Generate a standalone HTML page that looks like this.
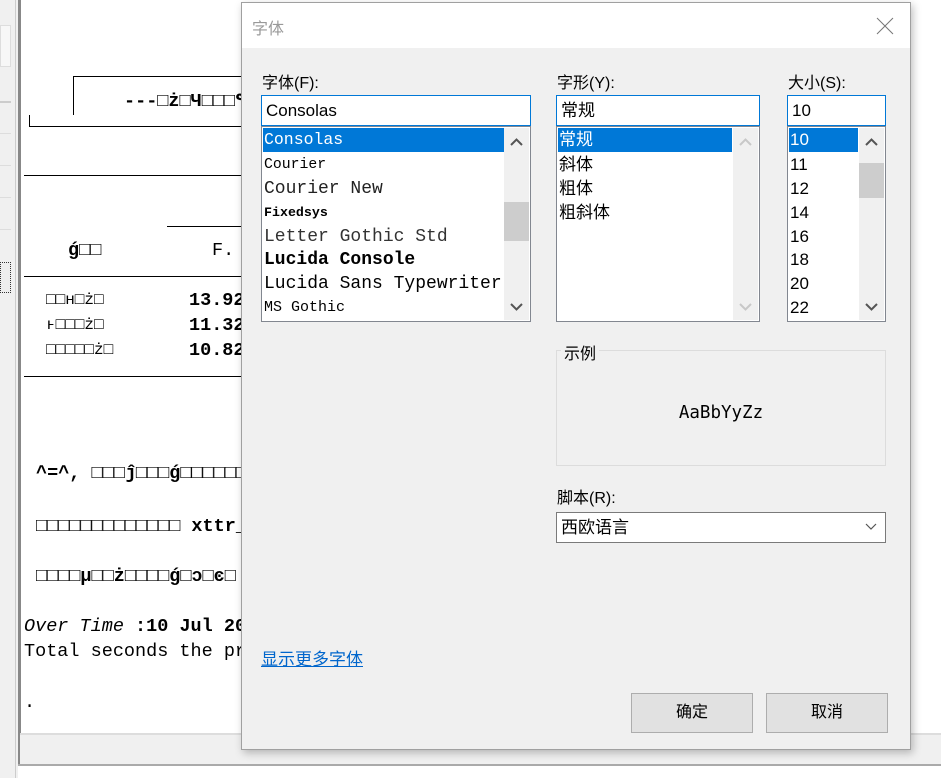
<!DOCTYPE html>
<html><head><meta charset="utf-8"><style>
*{margin:0;padding:0;box-sizing:border-box}
body{width:941px;height:778px;position:relative;overflow:hidden;background:#fff;font-family:"Liberation Sans","Noto Sans CJK SC",sans-serif}
.a{position:absolute}
.mono{font-family:"Liberation Mono","DejaVu Sans Mono","Noto Sans CJK SC",monospace;font-size:18.5px;color:#000;white-space:pre}
.lbl{font-size:16px;color:#000;font-family:"Liberation Sans","Noto Sans CJK SC",sans-serif}
.box{background:#fff;border:1px solid #828790}
.inp{background:#fff;border:1px solid #0078d7;font-size:17px;padding:0 4px;line-height:29px}
.row{position:absolute;left:1px;height:24px;line-height:24px;font-size:16px;padding-left:1px;white-space:nowrap}
.sel{background:#0078d7;color:#fff}
.sb{position:absolute;top:1px;bottom:1px;background:#f0f0f0;width:25px}
.btn{position:absolute;background:#e1e1e1;border:1px solid #adadad;font-size:16px;text-align:center;line-height:38px}
</style></head><body>
<div class="a" style="left:0;top:0;width:18px;height:778px;background:#f0f0f0"></div>
<div class="a" style="left:0;top:25px;width:11px;height:42px;border:1px solid #ddd;background:#f7f7f7"></div>
<div class="a" style="left:0;top:101px;width:11px;height:2px;background:#ccc"></div>
<div class="a" style="left:0;top:133px;width:11px;height:1px;background:#ddd"></div>
<div class="a" style="left:0;top:165px;width:11px;height:1px;background:#ddd"></div>
<div class="a" style="left:0;top:197px;width:11px;height:1px;background:#ddd"></div>
<div class="a" style="left:0;top:229px;width:11px;height:1px;background:#ddd"></div>
<div class="a" style="left:0;top:262px;width:11px;height:31px;border:1px dotted #333;background:#eee"></div>
<div class="a" style="left:15px;top:0;width:1px;height:778px;background:#ccc"></div>
<div class="a" style="left:18px;top:0;width:3px;height:735px;background:#888"></div>
<div class="a" style="left:20px;top:733px;width:921px;height:2px;background:#ddd"></div>
<div class="a" style="left:18px;top:735px;width:923px;height:30px;background:#f0f0f0;border-left:2px solid #888"></div>
<div class="a" style="left:18px;top:764px;width:923px;height:2px;background:#aaa"></div>
<div class="a" style="left:73px;top:76px;width:180px;height:39px;border-left:1px solid #000;border-top:1px solid #000"></div>
<div class="a" style="left:29px;top:115px;width:220px;height:12px;border-left:1px solid #000;border-bottom:1px solid #000"></div>
<div class="a mono" style="left:124px;top:90px;font-weight:bold">---□ż□Ч□□□٩</div>
<div class="a" style="left:24px;top:175px;width:220px;height:1px;background:#000"></div>
<div class="a" style="left:167px;top:226px;width:80px;height:1px;background:#000"></div>
<div class="a mono" style="left:68px;top:240px;font-weight:bold">ǵ□□</div>
<div class="a mono" style="left:212px;top:240px">F.</div>
<div class="a" style="left:24px;top:276px;width:220px;height:1px;background:#000"></div>
<div class="a mono" style="left:46px;top:291px;font-size:16px">□□ʜ□ż□</div>
<div class="a mono" style="left:46px;top:316px;font-size:16px">ⱶ□□□ż□</div>
<div class="a mono" style="left:46px;top:341px;font-size:16px">□□□□□ż□</div>
<div class="a mono" style="left:189px;top:290px;font-weight:bold">13.92</div>
<div class="a mono" style="left:189px;top:315px;font-weight:bold">11.32</div>
<div class="a mono" style="left:189px;top:340px;font-weight:bold">10.82</div>
<div class="a" style="left:24px;top:376px;width:220px;height:1px;background:#000"></div>
<div class="a mono" style="left:36px;top:463px;font-weight:bold">^=^, □□□ĵ□□□ǵ□□□□□□</div>
<div class="a mono" style="left:36px;top:516px;font-weight:bold">□□□□□□□□□□□□□ xttr_</div>
<div class="a mono" style="left:36px;top:566px;font-weight:bold">□□□□μ□□ż□□□□ǵ□ↄ□ͼ□</div>
<div class="a mono" style="left:24px;top:616px;font-style:italic">Over Time <b style="font-style:normal">:10 Jul 20</b></div>
<div class="a mono" style="left:24px;top:641px">Total seconds the pr</div>
<div class="a mono" style="left:24px;top:692px">.</div>

<div class="a" style="left:241px;top:2px;width:670px;height:748px;background:#f0f0f0;border:1px solid #a0a0a0;box-shadow:2px 3px 8px rgba(0,0,0,.25)">
 <div class="a" style="left:0;top:0;width:668px;height:45px;background:#fff"></div>
 <div class="a lbl" style="left:10px;top:12px;color:#999">字体</div>
 <svg class="a" style="left:634px;top:14px" width="18" height="18"><path d="M1 1L17 17M17 1L1 17" stroke="#777" stroke-width="1"/></svg>
</div>
<div class="a lbl" style="left:262px;top:69px">字体(F):</div>
<div class="a inp" style="left:261px;top:95px;width:270px;height:31px">Consolas</div>
<div class="a box" style="left:261px;top:126px;width:270px;height:196px;overflow:hidden">
 <div class="row sel mono" style="top:1px;width:241px;font-size:16.5px;color:#fff">Consolas</div>
 <div class="row mono" style="top:26px;font-size:14.8px">Courier</div>
 <div class="row mono" style="top:50px;font-size:18px;color:#222">Courier New</div>
 <div class="row mono" style="top:74px;font-size:13.3px;font-weight:bold">Fixedsys</div>
 <div class="row mono" style="top:98px;font-size:18px;color:#333">Letter Gothic Std</div>
 <div class="row mono" style="top:121px;font-size:18px;font-weight:bold">Lucida Console</div>
 <div class="row mono" style="top:145px;font-size:18px">Lucida Sans Typewriter</div>
 <div class="row mono" style="top:169px;font-size:15px">MS Gothic</div>
 <div class="sb" style="right:1px"></div>
 <div class="a" style="right:1px;top:75px;width:25px;height:39px;background:#cdcdcd"></div>
 <svg class="a" style="right:7px;top:11px" width="13" height="8"><path d="M1 7L6.5 1.5L12 7" stroke="#555" stroke-width="2" fill="none"/></svg>
 <svg class="a" style="right:7px;top:176px" width="13" height="8"><path d="M1 1L6.5 6.5L12 1" stroke="#555" stroke-width="2" fill="none"/></svg>
</div>

<div class="a lbl" style="left:557px;top:69px">字形(Y):</div>
<div class="a inp" style="left:556px;top:95px;width:204px;height:31px">常规</div>
<div class="a box" style="left:556px;top:126px;width:204px;height:196px;overflow:hidden">
 <div class="row sel" style="top:1px;width:174px;font-size:17px">常规</div>
 <div class="row" style="top:26px;font-size:17px">斜体</div>
 <div class="row" style="top:50px;font-size:17px">粗体</div>
 <div class="row" style="top:74px;font-size:17px">粗斜体</div>
 <div class="sb" style="right:1px"></div>
 <svg class="a" style="right:7px;top:11px" width="13" height="8"><path d="M1 7L6.5 1.5L12 7" stroke="#c8c8c8" stroke-width="2" fill="none"/></svg>
 <svg class="a" style="right:7px;top:176px" width="13" height="8"><path d="M1 1L6.5 6.5L12 1" stroke="#c8c8c8" stroke-width="2" fill="none"/></svg>
</div>

<div class="a lbl" style="left:788px;top:69px">大小(S):</div>
<div class="a inp" style="left:787px;top:95px;width:99px;height:31px">10</div>
<div class="a box" style="left:787px;top:126px;width:99px;height:196px;overflow:hidden">
 <div class="row sel" style="top:1px;width:69px;font-size:17px">10</div>
 <div class="row" style="top:26px;font-size:17px">11</div>
 <div class="row" style="top:50px;font-size:17px">12</div>
 <div class="row" style="top:74px;font-size:17px">14</div>
 <div class="row" style="top:98px;font-size:17px">16</div>
 <div class="row" style="top:121px;font-size:17px">18</div>
 <div class="row" style="top:145px;font-size:17px">20</div>
 <div class="row" style="top:169px;font-size:17px">22</div>
 <div class="sb" style="right:1px"></div>
 <div class="a" style="right:1px;top:36px;width:25px;height:35px;background:#cdcdcd"></div>
 <svg class="a" style="right:7px;top:11px" width="13" height="8"><path d="M1 7L6.5 1.5L12 7" stroke="#555" stroke-width="2" fill="none"/></svg>
 <svg class="a" style="right:7px;top:176px" width="13" height="8"><path d="M1 1L6.5 6.5L12 1" stroke="#555" stroke-width="2" fill="none"/></svg>
</div>

<div class="a" style="left:556px;top:350px;width:330px;height:116px;border:1px solid #dcdcdc"></div>
<div class="a lbl" style="left:561px;top:340px;background:#f0f0f0;padding:0 3px">示例</div>
<div class="a" style="left:556px;top:403px;width:330px;text-align:center;font-family:'DejaVu Sans Mono',monospace;font-size:17.5px">AaBbYyZz</div>

<div class="a lbl" style="left:557px;top:484px">脚本(R):</div>
<div class="a" style="left:556px;top:512px;width:330px;height:31px;background:#fff;border:1px solid #7a7a7a;font-size:17px;padding:0 4px;line-height:29px">西欧语言</div>
<svg class="a" style="left:865px;top:523px" width="12" height="8"><path d="M1 1L6 6L11 1" stroke="#555" stroke-width="1.2" fill="none"/></svg>

<div class="a lbl" style="left:261px;top:645px;color:#0066cc;text-decoration:underline;font-size:17px">显示更多字体</div>
<div class="btn" style="left:631px;top:693px;width:122px;height:40px">确定</div>
<div class="btn" style="left:766px;top:693px;width:122px;height:40px">取消</div>
</body></html>
